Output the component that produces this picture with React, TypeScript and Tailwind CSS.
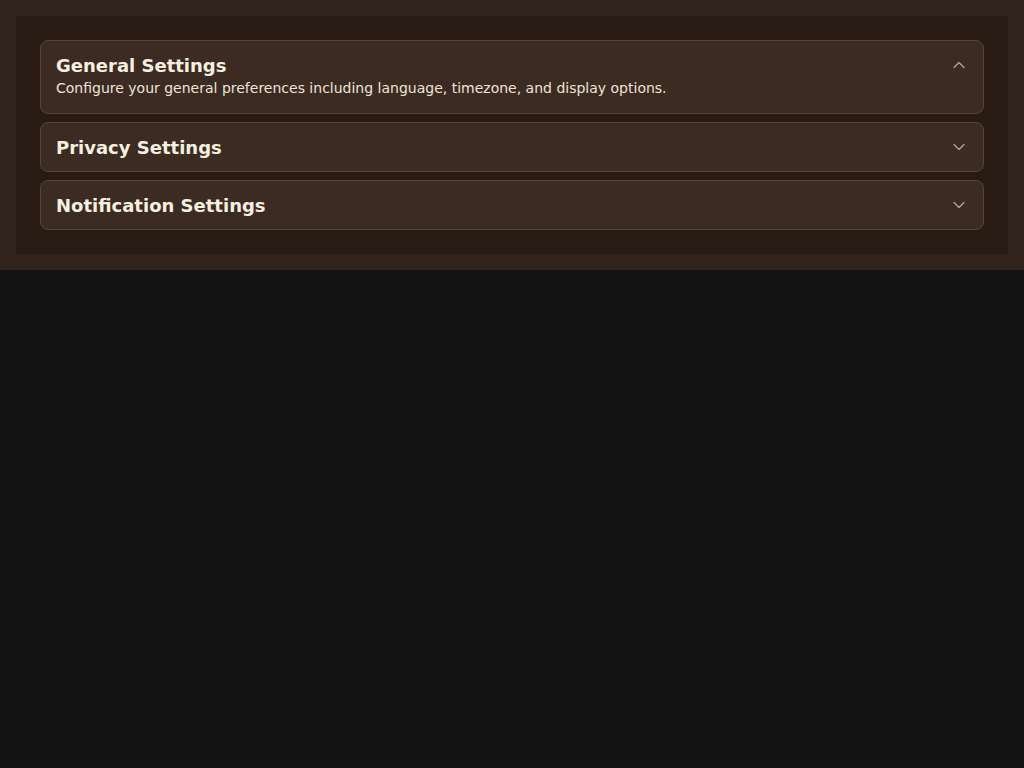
import { ChevronDown, ChevronUp } from "lucide-react";

const sections = [
  {
    title: "General Settings",
    body: "Configure your general preferences including language, timezone, and display options.",
    open: true,
  },
  { title: "Privacy Settings", body: "", open: false },
  { title: "Notification Settings", body: "", open: false },
];

export default function App() {
  return (
    <div className="min-h-screen bg-[#131313] font-['DejaVu_Sans',sans-serif]">
      <div className="bg-[#30231b] p-4">
        <div className="bg-[#281b14] p-6 flex flex-col gap-2">
          {sections.map((s) => (
            <div
              key={s.title}
              className="rounded-lg border border-[#55443a] bg-[#3c2b22] px-[15px] pt-3 pb-[10px]"
            >
              <div className="flex items-center justify-between">
                <h3 className="text-lg leading-[26px] font-bold text-[#f6f0e1]">{s.title}</h3>
                {s.open ? (
                  <ChevronUp className="w-5 h-5 -mt-0.5 mr-[-1px] text-[#b3a595]" strokeWidth={1.5} />
                ) : (
                  <ChevronDown className="w-5 h-5 -mt-0.5 mr-[-1px] text-[#b3a595]" strokeWidth={1.5} />
                )}
              </div>
              {s.open && (
                <p className="-mt-px mb-[5px] text-sm leading-5 text-[#ece4d6]">{s.body}</p>
              )}
            </div>
          ))}
        </div>
      </div>
    </div>
  );
}
